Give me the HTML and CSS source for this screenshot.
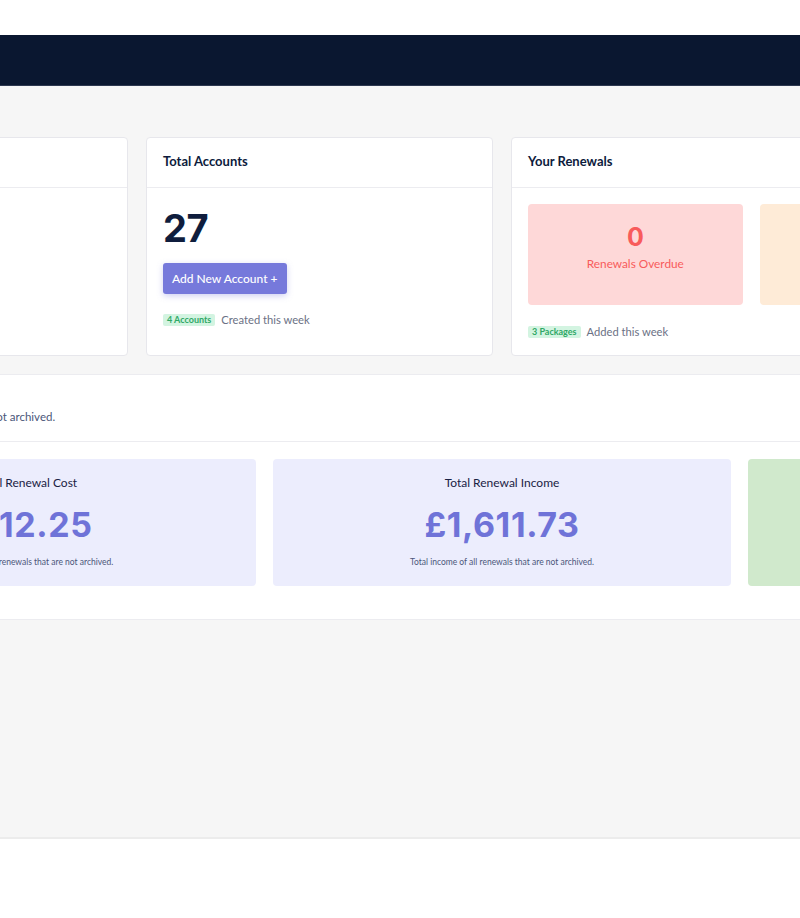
FILE: index.html
```html
<!DOCTYPE html>
<html lang="en">
<head>
<meta charset="utf-8">
<title>Dashboard</title>
<link rel="stylesheet" href="styles.css">
</head>
<body>
<div class="topstrip"></div>
<nav class="navbar"></nav>
<main class="main">
  <div class="wrap">
    <section class="cards">
      <div class="card">
        <div class="card-head">Total Users</div>
        <div class="card-body">
          <div class="big">12</div>
          <button class="btn">Add User +</button>
          <div class="foot"><span class="badge">2 Users</span><span class="muted">This week</span></div>
        </div>
      </div>
      <div class="card">
        <div class="card-head">Total Accounts</div>
        <div class="card-body">
          <div class="big">27</div>
          <button class="btn">Add New Account +</button>
          <div class="foot"><span class="badge">4 Accounts</span><span class="muted">Created this week</span></div>
        </div>
      </div>
      <div class="card wide">
        <div class="card-head">Your Renewals</div>
        <div class="card-body">
          <div class="tiles">
            <div class="tile red"><div class="tile-num">0</div><div class="tile-label">Renewals Overdue</div></div>
            <div class="tile orange"><div class="tile-num">5</div><div class="tile-label">Renewals Due Soon</div></div>
            <div class="tile green"><div class="tile-num">22</div><div class="tile-label">Renewals Active</div></div>
          </div>
          <div class="foot"><span class="badge">3 Packages</span><span class="muted">Added this week</span></div>
        </div>
      </div>
    </section>
  </div>
  <section class="panel">
    <div class="wrap">
      <div class="panel-head">
        <div class="panel-title">Renewals</div>
        <div class="panel-sub">Cost summary of all renewals that are not archived.</div>
      </div>
    </div>
    <div class="wrap">
      <div class="stats">
        <div class="stat">
          <div class="stat-title">Total Renewal Cost</div>
          <div class="stat-amount">£112.25</div>
          <div class="stat-desc">Total cost of all renewals that are not archived.</div>
        </div>
        <div class="stat">
          <div class="stat-title">Total Renewal Income</div>
          <div class="stat-amount">£1,611.73</div>
          <div class="stat-desc">Total income of all renewals that are not archived.</div>
        </div>
        <div class="stat profit">
          <div class="stat-title">Total Renewal Profit</div>
          <div class="stat-amount">£1,499.48</div>
          <div class="stat-desc">Total profit of all renewals that are not archived.</div>
        </div>
      </div>
    </div>
  </section>
</main>
<footer class="footer"></footer>
</body>
</html>
```

FILE: styles.css
```css
* { box-sizing: border-box; }
html, body { margin: 0; padding: 0; }
body {
  font-family: "Lato", "Liberation Sans", sans-serif;
  background: #ffffff;
  color: #0f1d3d;
  overflow: hidden;
  width: 800px;
}
.topstrip { height: 35px; background: #ffffff; }
.navbar {
  height: 51px;
  background: #0a1730;
  border-bottom: 1px solid #2d3850;
}
.main {
  background: #f6f6f6;
  padding-top: 51px;
  height: 751px;
}
.wrap {
  width: 1442px;
  margin-left: -219px;
}
.cards {
  display: grid;
  grid-template-columns: repeat(4, 1fr);
  gap: 18px;
}
.card {
  background: #fff;
  border: 1px solid #e7e7ec;
  border-radius: 4px;
  display: flex;
  flex-direction: column;
}
.card.wide { grid-column: span 2; }
.card-head {
  height: 50px;
  padding: 0 16px 3px;
  display: flex;
  align-items: center;
  font-size: 13px;
  font-weight: 700;
  color: #0d1b3c;
  border-bottom: 1px solid #ececf0;
}
.card-body { padding: 17px 16px 16px; }
.big {
  font-family: "Inter", "Liberation Sans", sans-serif;
  font-size: 38px;
  font-weight: 700;
  line-height: 46px;
  color: #0f1d3d;
  letter-spacing: -0.5px;
}
.btn {
  margin-top: 12px;
  height: 31px;
  padding: 0 9px;
  border: none;
  border-radius: 3px;
  background: #7679db;
  color: #fff;
  font-family: inherit;
  font-size: 12px;
  font-weight: 500;
  box-shadow: 0 2px 6px rgba(118, 121, 219, 0.35);
  display: block;
}
.foot {
  margin-top: 19px;
  display: flex;
  align-items: center;
  gap: 6px;
  line-height: 14px;
}
.badge {
  background: #d3f4e1;
  color: #2fa866;
  font-size: 9px;
  font-weight: 700;
  padding: 0 4px;
  border-radius: 2px;
  line-height: 12px;
}
.muted { color: #6b7185; font-size: 11.2px; }
.tiles {
  display: grid;
  grid-template-columns: repeat(3, 1fr);
  gap: 17px;
  margin-top: -1px;
}
.tile {
  height: 101px;
  border-radius: 4px;
  padding-top: 19px;
  text-align: center;
}
.tile-num { font-family: "Inter", "Liberation Sans", sans-serif; font-size: 25px; font-weight: 700; line-height: 28px; }
.tile-label { font-size: 11.8px; line-height: 16px; margin-top: 5px; }
.tile.red { background: #fed8d8; color: #f85b5b; }
.tile.orange { background: #feebd7; color: #ed8936; }
.tile.green { background: #d5eed2; color: #38a169; }
.wide .foot { margin-top: 20px; }

.panel {
  margin-top: 18px;
  background: #fff;
  border-top: 1px solid #ececf0;
  border-bottom: 1px solid #ececf0;
  height: 246px;
}
.panel-head {
  padding: 16px 17px 16px;
  border-bottom: 1px solid #ececf0;
}
.panel-title { font-size: 13px; font-weight: 700; line-height: 18px; color: #0d1b3c; }
.panel-sub { font-size: 11.5px; line-height: 16px; color: #4b567a; }
.stats {
  display: grid;
  grid-template-columns: repeat(3, 1fr);
  gap: 17px;
  padding: 17px 17px 0;
}
.stat {
  background: #ecedfd;
  border-radius: 4px;
  height: 127px;
  text-align: center;
  padding-top: 16px;
}
.stat.profit { background: #d0e9cc; }
.stat-title { font-size: 12px; line-height: 16px; color: #1a2244; }
.stat-amount {
  font-family: "Inter", "Liberation Sans", sans-serif;
  font-size: 34px;
  font-weight: 700;
  line-height: 40px;
  color: #6f73d8;
  margin-top: 14px;
  letter-spacing: 0.6px;
}
.stat.profit .stat-amount { color: #38a169; }
.stat-desc { font-size: 8.5px; line-height: 12px; color: #4b567a; margin-top: 11px; }
.footer {
  border-top: 2px solid #ececec;
  background: #fff;
  height: 81px;
}
```
